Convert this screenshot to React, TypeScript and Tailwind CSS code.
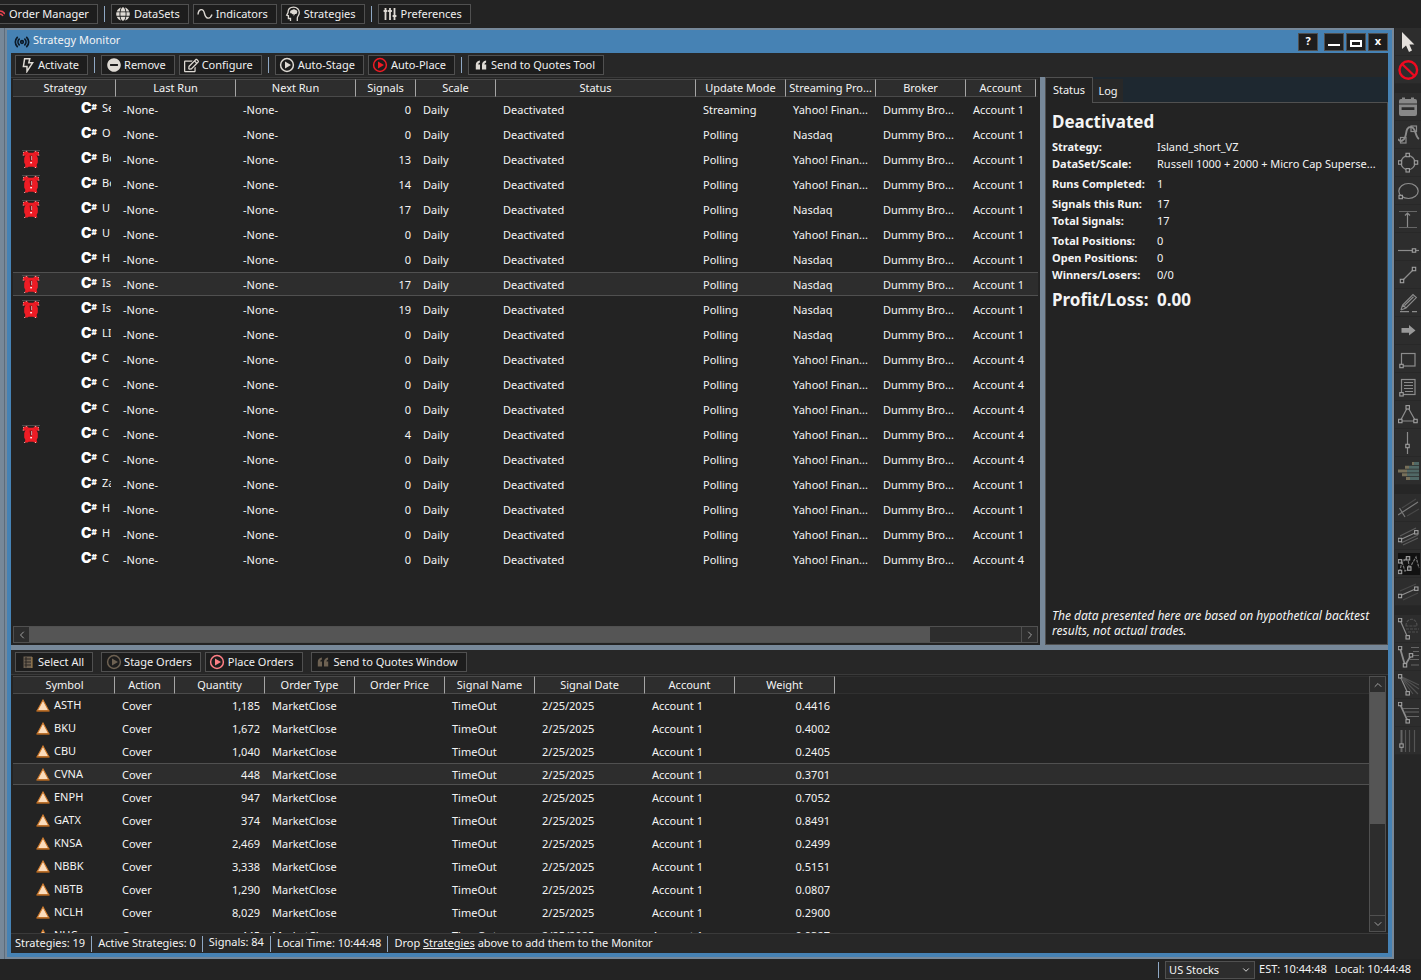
import type { ReactNode } from "react";
import { Radio, ChevronLeft, ChevronRight, ChevronUp, ChevronDown } from "lucide-react";
import { FaGlobe, FaMinusCircle, FaRegEdit } from "react-icons/fa";

/* ---------- icons ---------- */

function PlayIcon() {
  return (
    <svg viewBox="0 0 16 16" className="size-4" fill="none" stroke="currentColor" strokeWidth="1.5">
      <circle cx="8" cy="8" r="6.4" />
      <path d="M6 4.6 L12 8 L6 11.4 Z" fill="currentColor" stroke="none" />
    </svg>
  );
}

function BoltIcon() {
  return (
    <svg viewBox="0 0 16 16" className="size-4" fill="none" stroke="currentColor" strokeWidth="1.5">
      <path d="M4.6 1.8H9.8L8.8 5.8H12.6L7 14.4V9.4H3.4Z" />
    </svg>
  );
}

function QuoteIcon() {
  return (
    <svg viewBox="0 0 16 16" className="size-4" fill="currentColor">
      <path d="M6.9 3.4V5.4Q5.2 5.8 5.2 7.6H7V12.6H2.8V8Q2.8 4 6.9 3.4Z" />
      <path d="M13.1 3.4V5.4Q11.4 5.8 11.4 7.6H13.2V12.6H9V8Q9 4 13.1 3.4Z" />
    </svg>
  );
}

function WaveIcon() {
  return (
    <svg viewBox="0 0 16 16" className="size-4" fill="none" stroke="currentColor" strokeWidth="1.4">
      <path d="M1 8.5C1.5 2.5 6.2 2 7.5 7.5S13 14 15 8.5" />
    </svg>
  );
}

function HeadIcon() {
  return (
    <svg viewBox="0 0 16 16" className="size-4" fill="none" stroke="currentColor" strokeWidth="1.3">
      <path d="M5.5 15V12.5H3.4V9.8L1.7 9.2L3 6.6C3 3 5.5 1.2 8.5 1.2C12 1.2 14.3 3.6 14.3 6.7C14.3 9.3 12.3 10.4 12.3 12V15" />
      <path d="M5.2 6.8C4.6 5.2 6 3.9 7.2 4C8 2.8 10 3 10.6 4C12 4 12.8 5.6 12 6.8C12 8 10.8 8.3 10 8L8.6 10.3V8.2C7.5 8.6 6.8 8 6.8 7.3C6 7.6 5.4 7.4 5.2 6.8Z" fill="currentColor" stroke="none" />
    </svg>
  );
}

function SlidersIcon() {
  return (
    <svg viewBox="0 0 16 16" className="size-4" fill="none" stroke="currentColor" strokeWidth="1.8">
      <path d="M3.5 2V14M8 2V14M12.5 2V14" />
      <path d="M1.6 5H5.4M6.1 5H9.9M10.6 10H14.4" strokeWidth="2" />
    </svg>
  );
}

function ListIcon() {
  return (
    <svg viewBox="0 0 16 16" className="size-4">
      <rect x="3.5" y="2.5" width="8.5" height="11.5" fill="#6d6152" />
      <path d="M4.5 5H11M4.5 8H11M4.5 11H11" stroke="#2b2622" />
      <path d="M6 3V13.5" stroke="#2b2622" />
      <path d="M12 3V14" stroke="#a8834a" />
    </svg>
  );
}

function AlarmIcon() {
  return (
    <svg viewBox="0 0 18 18" className="size-[18px]">
      <path d="M0 .5H18" stroke="#4c4c4c" />
      <path d="M1 5.4V2.6L3 1.4H6L6.4 3L3.4 5.8ZM17 5.4V2.6L15 1.4H12L11.6 3L14.6 5.8Z" fill="#ee1c25" />
      <path d="M6 2.8H12L14.8 5.8L15.8 8V12.6L14.6 15L15.4 17.6H12.4L11.4 16.8H6.6L5.6 17.6H2.6L3.4 15L2.2 12.6V8L3.2 5.8Z" fill="#ee1c25" />
      <path d="M1.2 5.6V2.6L3 1.4H6M16.8 5.6V2.6L15 1.4H12M2.2 17.5H5M13 17.5H15.8" fill="none" stroke="#f5b5b0" strokeDasharray="1 2" />
      <path d="M7.6 5.6H10.4L9.8 11H8.2Z" fill="#7c1216" />
      <path d="M9.6 6V10.2" stroke="#d8c8c8" strokeWidth=".8" />
      <rect x="8.3" y="12" width="1.6" height="1.4" fill="#fff" />
    </svg>
  );
}

function TriangleIcon() {
  return (
    <svg viewBox="0 0 14 13" className="h-[13px] w-[14px] shrink-0">
      <path d="M7 1 L12.8 11.8 H1.2 Z" fill="#fbdcbc" stroke="#cf7a2b" strokeWidth="1.1" />
      <path d="M.6 12H13.4" stroke="#b0651f" strokeWidth="1.3" />
    </svg>
  );
}

/* ---------- drawing tool palette ---------- */

const Dot = ({ x, y }: { x: number; y: number }) => (
  <rect x={x - 1.7} y={y - 1.7} width="3.4" height="3.4" fill="#2d2d2d" stroke="#a0a0a0" strokeWidth="1.1" />
);

const tools: { name: string; art: ReactNode; dark?: boolean }[][] = [
  [
    { name: "Pointer", art: <path d="M4 1V18L8 14.6L11 21L14 19.6L11.4 13.6H16.4Z" fill="#e4e0dc" stroke="none" /> },
    {
      name: "Clear",
      art: (
        <g stroke="#ee0a20" strokeWidth="2.4">
          <circle cx="10.3" cy="11" r="8.8" />
          <path d="M4 5L16.6 17" />
        </g>
      ),
    },
  ],
  [
    {
      name: "Calendar",
      art: (
        <g stroke="none" fill="#888">
          <path d="M1 7.6V5Q1 3 3 3H4V1.5H7V3H13V1.5H16V3H17Q19 3 19 5V7.6Z" />
          <path d="M1 8.4H19V18Q19 20 17 20H3Q1 20 1 18ZM3.6 11.2V14H16.4V11.2Z" fillRule="evenodd" />
        </g>
      ),
    },
    {
      name: "Curve",
      art: (
        <>
          <path d="M0 15C2 18 4 17 5 16C10 13 6 3 13 3C18 3 17 13 21 15" strokeWidth="1.9" />
          <rect x="2.5" y="13.5" width="5.5" height="5.5" />
          <rect x="13" y="2" width="5.5" height="5.5" />
        </>
      ),
    },
    {
      name: "Circle",
      art: (
        <>
          <circle cx="10" cy="10.7" r="7" />
          <Dot x={9.7} y={3} />
          <Dot x={2} y={10.5} />
          <Dot x={18} y={10.5} />
          <Dot x={9.7} y={18.3} />
        </>
      ),
    },
    {
      name: "Ellipse",
      art: (
        <>
          <ellipse cx="10.5" cy="11" rx="9.7" ry="7.5" />
          <Dot x={2.7} y={17} />
        </>
      ),
    },
    {
      name: "Range",
      art: (
        <>
          <path d="M1 3.5H19M1 19.5H19" stroke="#666" />
          <path d="M9.5 19V5M7 7.5L9.5 5L12 7.5" />
        </>
      ),
    },
    {
      name: "Horizontal line",
      art: (
        <>
          <path d="M0 14.5H21" />
          <Dot x={16} y={14.5} />
        </>
      ),
    },
    {
      name: "Trend line",
      art: (
        <>
          <path d="M4 17L16 5" />
          <Dot x={4} y={17} />
          <Dot x={16} y={5} />
        </>
      ),
    },
    { name: "Pencil", art: <path d="M3 18L4.6 13L15 2.6L18.3 5.6L8 16L3 18M4.6 13L8 16M6.5 13.5L15.5 4.8M2 19.6H11M14 19.6H19" /> },
    { name: "Arrow", art: <path d="M3.5 8H11V5L17.5 10.4L11 15.6V12.8H3.5Z" fill="#999" stroke="none" /> },
    {
      name: "Rectangle",
      art: (
        <>
          <rect x="3.5" y="5.5" width="13.5" height="12.5" />
          <Dot x={3.5} y={18} />
        </>
      ),
    },
    {
      name: "Text note",
      art: (
        <>
          <rect x="3.5" y="3.5" width="13.5" height="15" />
          <path d="M6 6.5H15M6 9.5H15M6 12.5H15M7 15.5H15" />
          <Dot x={3.5} y={18.3} />
        </>
      ),
    },
    {
      name: "Triangle",
      art: (
        <>
          <path d="M9.7 3L2.3 17H17.5Z" />
          <Dot x={9.7} y={3.3} />
          <Dot x={2.3} y={17} />
          <Dot x={17.5} y={17} />
        </>
      ),
    },
    {
      name: "Vertical line",
      art: (
        <>
          <path d="M9.5 0V22" />
          <Dot x={9.5} y={14} />
        </>
      ),
    },
    {
      name: "Volume profile",
      art: (
        <g strokeWidth="3">
          <path d="M16 3.4H21M11 7.2H21M9 11H21M9 14.8H21M12 18.6H21" stroke="#506866" />
          <path d="M14 3.4H16M7 7.2H11M0 11H9M4 14.8H9M8 18.6H12" stroke="#77705a" />
        </g>
      ),
    },
  ],
  [
    {
      name: "Pitchfork",
      art: (
        <>
          <path d="M0 18L20 5M1.5 11L7 20" stroke="#7a7a7a" />
          <path d="M4 11L18 2M9 19L21 12" stroke="#484848" />
        </>
      ),
    },
    {
      name: "Channel",
      art: (
        <>
          <path d="M1.5 15L18 7.5" />
          <path d="M2 11L18 3M3 18L20 10M5 20L20 13" stroke="#5c5c5c" />
          <Dot x={1.9} y={15} />
          <Dot x={18.3} y={7.3} />
        </>
      ),
    },
    {
      name: "Pattern",
      dark: true,
      art: (
        <>
          <path d="M1.5 19L4 9L10 5.3L11.3 15.6L18 4L21 15M1.5 8.3L10 5.3M4 9L7 18L11 15.6" stroke="#777" strokeDasharray="3 1" />
          <Dot x={2} y={8.3} />
          <Dot x={2} y={19} />
          <Dot x={10} y={5.3} />
          <Dot x={11.3} y={15.6} />
        </>
      ),
    },
    {
      name: "Regression",
      art: (
        <>
          <path d="M1.5 15L18 7.7" />
          <path d="M2 10L18 3M5 19L20 12" stroke="#484848" />
          <Dot x={1.9} y={15} />
          <Dot x={18.3} y={7.7} />
        </>
      ),
    },
  ],
  [
    {
      name: "Fibonacci arcs",
      art: (
        <>
          <path d="M2 2L9.5 19" />
          <path d="M8 8C8 -1 19 -1 19 8ZM8 11H21M10 14H20" stroke="#505050" strokeDasharray="3 1" />
          <Dot x={2} y={2} />
          <Dot x={9.7} y={19.3} />
        </>
      ),
    },
    {
      name: "Fibonacci extension",
      art: (
        <>
          <path d="M2 2L7 19.3L13 9.5" strokeWidth="1.8" />
          <path d="M13 1.5H21M15 5.5H21M15 9.5H21M12 13.5H21M13 19H21" stroke="#666" />
          <Dot x={2} y={2} />
          <Dot x={7} y={19.3} />
          <Dot x={13} y={9.3} />
        </>
      ),
    },
    {
      name: "Fibonacci fan",
      art: (
        <>
          <path d="M2 2L9.7 19" />
          <path d="M2 2L21 11M2 2L21 15M2 2L20 20M2 2L15 20" stroke="#505050" />
          <Dot x={2} y={2.3} />
          <Dot x={9.7} y={19.3} />
        </>
      ),
    },
    {
      name: "Fibonacci retracement",
      art: (
        <>
          <path d="M2 2L9.7 19" strokeWidth="1.8" />
          <path d="M5 6.5H21M7 10H21M8 14.5H21" stroke="#666" />
          <Dot x={2} y={2} />
          <Dot x={9.7} y={19.3} />
        </>
      ),
    },
    {
      name: "Time zones",
      art: (
        <>
          <path d="M3.5 0V22" stroke="#666" strokeWidth="2" />
          <path d="M7.5 0V22M11.5 0V22M16.5 0V22" stroke="#555" />
          <Dot x={3.5} y={15.6} />
        </>
      ),
    },
  ],
];

function ToolPalette() {
  return (
    <aside className="flex w-[27px] shrink-0 flex-col gap-[9px] bg-[#262626]">
      {tools.map((group, i) => (
        <div key={i} className="flex flex-col">
          {group.map((t) => (
            <button key={t.name} aria-label={t.name} className="flex h-7 items-center border-b border-l border-[#282828] bg-[#2d2d2d] pl-[3px]">
              <svg viewBox="0 0 22 22" className={t.dark ? "size-[22px] bg-[#111111]" : "size-[22px]"} fill="none" stroke="#8c8c8c" strokeWidth="1.2">
                {t.art}
              </svg>
            </button>
          ))}
        </div>
      ))}
    </aside>
  );
}

/* ---------- shared controls ---------- */

function ToolButton({ icon, label }: { icon: ReactNode; label: string }) {
  return (
    <button className="flex h-5 shrink-0 items-center gap-[2px] whitespace-nowrap border border-[#505050] bg-[#1d1d1d] pl-[3px] pr-2 text-[#f0f0f0]">
      <span className="flex size-[17px] items-center justify-center text-[#dedad4]">{icon}</span>
      <span>{label}</span>
    </button>
  );
}

const Divider = () => <span className="mx-[2px] h-4 w-px shrink-0 bg-[#8fa8c4]" />;

interface Column {
  label: string;
  width: string;
}

function HeaderRow({ columns }: { columns: Column[] }) {
  return (
    <thead>
      <tr>
        {columns.map((c) => (
          <th
            key={c.label}
            scope="col"
            className="h-[18px] overflow-hidden whitespace-nowrap border-y border-r border-y-[#4a4a4a] border-r-[#a5a5a5] bg-[#2d2d2d] p-0 text-center font-normal leading-4 first:pl-[2px]"
          >
            {c.label}
          </th>
        ))}
        <th className="border-y border-[#303030] bg-[#262626] p-0" />
      </tr>
    </thead>
  );
}

/* ---------- strategies table ---------- */

const strategyColumns: Column[] = [
  { label: "Strategy", width: "w-[103px]" },
  { label: "Last Run", width: "w-[120px]" },
  { label: "Next Run", width: "w-[120px]" },
  { label: "Signals", width: "w-[60px]" },
  { label: "Scale", width: "w-[80px]" },
  { label: "Status", width: "w-[200px]" },
  { label: "Update Mode", width: "w-[90px]" },
  { label: "Streaming Pro...", width: "w-[90px]" },
  { label: "Broker", width: "w-[90px]" },
  { label: "Account", width: "w-[70px]" },
];

const YAHOO = "Yahoo! Finan...";
type Strategy = [name: string, alarm: boolean, signals: number, mode: string, provider: string, account: string];

const strategies: Strategy[] = [
  ["Se", false, 0, "Streaming", YAHOO, "Account 1"],
  ["O", false, 0, "Polling", "Nasdaq", "Account 1"],
  ["Bo", true, 13, "Polling", YAHOO, "Account 1"],
  ["Bo", true, 14, "Polling", YAHOO, "Account 1"],
  ["U", true, 17, "Polling", "Nasdaq", "Account 1"],
  ["U", false, 0, "Polling", YAHOO, "Account 1"],
  ["H", false, 0, "Polling", "Nasdaq", "Account 1"],
  ["Is", true, 17, "Polling", "Nasdaq", "Account 1"],
  ["Is", true, 19, "Polling", "Nasdaq", "Account 1"],
  ["LI", false, 0, "Polling", "Nasdaq", "Account 1"],
  ["C", false, 0, "Polling", YAHOO, "Account 4"],
  ["C", false, 0, "Polling", YAHOO, "Account 4"],
  ["C", false, 0, "Polling", YAHOO, "Account 4"],
  ["C", true, 4, "Polling", YAHOO, "Account 4"],
  ["C", false, 0, "Polling", YAHOO, "Account 4"],
  ["Za", false, 0, "Polling", YAHOO, "Account 1"],
  ["H", false, 0, "Polling", YAHOO, "Account 1"],
  ["H", false, 0, "Polling", YAHOO, "Account 1"],
  ["C", false, 0, "Polling", YAHOO, "Account 4"],
];

function StrategyTable() {
  return (
    <table className="w-full table-fixed border-separate border-spacing-0">
      <colgroup>
        {strategyColumns.map((c) => (
          <col key={c.label} className={c.width} />
        ))}
        <col />
      </colgroup>
      <HeaderRow columns={strategyColumns} />
      <tbody>
        {strategies.map(([name, alarm, signals, mode, provider, account], i) => {
          const selected = i === 7;
          const box = selected
            ? "flex h-6 items-center overflow-hidden whitespace-nowrap border-y border-[#505050] bg-[#2d2d2d]"
            : "flex h-6 items-center overflow-hidden whitespace-nowrap";
          const cells = ["-None-", "-None-", String(signals), "Daily", "Deactivated", mode, provider, "Dummy Bro...", account];
          return (
            <tr key={i}>
              <td className="h-[25px] p-0 align-top">
                <div className={box}>
                  <span className="flex w-[68px] shrink-0 pl-[9px]">{alarm && <AlarmIcon />}</span>
                  <span className="flex w-[21px] shrink-0 pb-[3px] font-['Inter',sans-serif] text-[14px] font-black leading-4 text-white">
                    C<span className="text-[8px] leading-[15px]">#</span>
                  </span>
                  <span className="w-[9px] shrink-0 overflow-hidden pb-[3px] leading-4">{name}</span>
                </div>
              </td>
              {cells.map((text, c) => (
                <td key={c} className="h-[25px] p-0 align-top">
                  <div className={box}>
                    <span className={c === 2 ? "w-full pr-[5px] pt-[2px] text-right" : "pl-[7px] pt-[2px]"}>{text}</span>
                  </div>
                </td>
              ))}
              <td className="h-[25px] p-0 align-top">
                <div className={box} />
              </td>
            </tr>
          );
        })}
      </tbody>
    </table>
  );
}

/* ---------- signals table ---------- */

const signalColumns: Column[] = [
  { label: "Symbol", width: "w-[102px]" },
  { label: "Action", width: "w-[60px]" },
  { label: "Quantity", width: "w-[90px]" },
  { label: "Order Type", width: "w-[90px]" },
  { label: "Order Price", width: "w-[90px]" },
  { label: "Signal Name", width: "w-[90px]" },
  { label: "Signal Date", width: "w-[110px]" },
  { label: "Account", width: "w-[90px]" },
  { label: "Weight", width: "w-[100px]" },
];

const signals: [symbol: string, quantity: string, weight: string][] = [
  ["ASTH", "1,185", "0.4416"],
  ["BKU", "1,672", "0.4002"],
  ["CBU", "1,040", "0.2405"],
  ["CVNA", "448", "0.3701"],
  ["ENPH", "947", "0.7052"],
  ["GATX", "374", "0.8491"],
  ["KNSA", "2,469", "0.2499"],
  ["NBBK", "3,338", "0.5151"],
  ["NBTB", "1,290", "0.0807"],
  ["NCLH", "8,029", "0.2900"],
  ["NHC", "445", "0.9327"],
];

function SignalTable() {
  return (
    <table className="w-full table-fixed border-separate border-spacing-0">
      <colgroup>
        {signalColumns.map((c) => (
          <col key={c.label} className={c.width} />
        ))}
        <col />
      </colgroup>
      <HeaderRow columns={signalColumns} />
      <tbody>
        {signals.map(([symbol, quantity, weight], i) => {
          const box =
            i === 3
              ? "flex h-[22px] items-center whitespace-nowrap border-y border-[#505050] bg-[#2d2d2d]"
              : "flex h-[22px] items-center whitespace-nowrap";
          const cells = ["Cover", quantity, "MarketClose", "", "TimeOut", "2/25/2025", "Account 1", weight];
          return (
            <tr key={symbol}>
              <td className="h-[23px] p-0 align-top">
                <div className={box}>
                  <span className="flex items-center gap-1 pl-[23px]">
                    <TriangleIcon />
                    {symbol}
                  </span>
                </div>
              </td>
              {cells.map((text, c) => (
                <td key={c} className="h-[23px] p-0 align-top">
                  <div className={box}>
                    <span className={c === 1 || c === 7 ? "w-full pr-[5px] pt-[2px] text-right" : "pl-[7px] pt-[2px]"}>{text}</span>
                  </div>
                </td>
              ))}
              <td className="h-[23px] p-0 align-top">
                <div className={box} />
              </td>
            </tr>
          );
        })}
      </tbody>
    </table>
  );
}

/* ---------- status panel ---------- */

const statusGroups: [string, string][][] = [
  [
    ["Strategy:", "Island_short_VZ"],
    ["DataSet/Scale:", "Russell 1000 + 2000 + Micro Cap Superse..."],
  ],
  [["Runs Completed:", "1"]],
  [
    ["Signals this Run:", "17"],
    ["Total Signals:", "17"],
  ],
  [
    ["Total Positions:", "0"],
    ["Open Positions:", "0"],
    ["Winners/Losers:", "0/0"],
  ],
];

function StatusPanel() {
  return (
    <section className="flex w-[343px] shrink-0 flex-col">
      <div role="tablist" className="flex h-[26px] shrink-0 items-end bg-[#1e2830]">
        <button role="tab" aria-selected="true" className="h-[26px] w-12 border border-b-0 border-[#505050] bg-[#232323]">
          Status
        </button>
        <button role="tab" aria-selected="false" className="h-6 w-[30px] border-b border-[#505050] bg-[#282828] pt-px">
          Log
        </button>
        <span className="h-px flex-1 bg-[#505050]" />
      </div>
      <div className="flex flex-1 flex-col border border-t-0 border-[#505050] px-[6px] pb-[6px]">
        <h2 className="mt-[6px] text-[17px] font-bold leading-[26px]">Deactivated</h2>
        <dl className="mt-[3px] flex flex-col gap-[3px]">
          {statusGroups.map((group, i) => (
            <div key={i}>
              {group.map(([k, v]) => (
                <div key={k} className="flex whitespace-nowrap leading-[17px]">
                  <dt className="w-[105px] shrink-0 font-bold">{k}</dt>
                  <dd>{v}</dd>
                </div>
              ))}
            </div>
          ))}
        </dl>
        <p className="mt-[5px] flex text-[17px] font-bold leading-6">
          <span className="w-[105px] shrink-0 whitespace-nowrap">Profit/Loss:</span>
          <span>0.00</span>
        </p>
        <p className="mt-auto text-[12px] italic leading-[15px]">
          The data presented here are based on hypothetical backtest results, not actual trades.
        </p>
      </div>
    </section>
  );
}

/* ---------- page ---------- */

const CaptionButton = ({ label, children }: { label: string; children: ReactNode }) => (
  <button aria-label={label} className="flex h-[18px] w-5 items-center justify-center border border-[#505050] bg-[#1d1d1d] font-bold text-white">
    {children}
  </button>
);

export default function App() {
  return (
    <div className="flex h-screen flex-col overflow-hidden bg-[#232323] font-['Noto_Sans',sans-serif] text-[11px] text-[#f4f4f4]">
      <nav className="flex h-7 shrink-0 items-center gap-1 overflow-hidden">
        <button className="flex h-5 items-center gap-1 whitespace-nowrap border border-l-0 border-[#505050] bg-[#1d1d1d] pr-2">
          <svg viewBox="0 0 5 16" className="h-4 w-[5px]" fill="none" stroke="#e8434f" strokeWidth="1.5">
            <path d="M0 5Q3 5 5 8M0 8Q2 8 3 10" />
          </svg>
          Order Manager
        </button>
        <Divider />
        <ToolButton icon={<FaGlobe className="size-[14px]" />} label="DataSets" />
        <ToolButton icon={<WaveIcon />} label="Indicators" />
        <ToolButton icon={<HeadIcon />} label="Strategies" />
        <Divider />
        <ToolButton icon={<SlidersIcon />} label="Preferences" />
      </nav>

      <div className="flex min-h-0 flex-1">
        <div className="w-[5px] shrink-0 border-r border-[#5d6c7b] bg-[#778899]" />
        <main className="flex min-w-0 flex-1 flex-col border-2 border-[#778899]">
          <div className="flex min-h-0 flex-1 flex-col border-4 border-t-0 border-[#4682b4]">
            <header className="flex h-[23px] shrink-0 items-center gap-[3px] bg-[#4682b4] pl-[3px]">
              <Radio className="size-4 text-[#0c1a28]" strokeWidth={2.5} />
              <h1 className="pb-[2px]">Strategy Monitor</h1>
              <div className="ml-auto flex gap-[2px]">
                <CaptionButton label="Help">?</CaptionButton>
                <span className="w-[2px]" />
                <CaptionButton label="Minimize">
                  <span className="mt-[6px] h-[2px] w-3 bg-white" />
                </CaptionButton>
                <CaptionButton label="Maximize">
                  <span className="mt-[3px] h-[7px] w-3 border-2 border-white" />
                </CaptionButton>
                <CaptionButton label="Close">x</CaptionButton>
              </div>
            </header>

            <div className="flex min-h-0 flex-[592_0_0px] flex-col">
              <div className="flex h-6 shrink-0 items-center gap-1 bg-[#272727] pl-1">
                <ToolButton icon={<BoltIcon />} label="Activate" />
                <Divider />
                <ToolButton icon={<FaMinusCircle className="size-[14px]" />} label="Remove" />
                <ToolButton icon={<FaRegEdit className="size-[15px]" />} label="Configure" />
                <Divider />
                <ToolButton icon={<PlayIcon />} label="Auto-Stage" />
                <ToolButton icon={<span className="text-[#ee1c25]"><PlayIcon /></span>} label="Auto-Place" />
                <Divider />
                <ToolButton icon={<QuoteIcon />} label="Send to Quotes Tool" />
              </div>
              <div className="flex min-h-0 flex-1">
                <section className="flex min-w-0 flex-1 flex-col border-t border-[#3a3a3a] px-[2px] pb-[2px] pt-px">
                  <div className="min-h-0 flex-1 overflow-hidden">
                    <StrategyTable />
                  </div>
                  <div className="flex h-[17px] shrink-0 border border-[#505050] bg-[#2d2d2d]">
                    <button aria-label="Scroll left" className="flex w-[15px] shrink-0 items-center justify-center text-[#a0a0a0]">
                      <ChevronLeft className="size-3" />
                    </button>
                    <div className="flex-[901_0_0px] bg-[#555555]" />
                    <div className="flex-[91_0_0px]" />
                    <button aria-label="Scroll right" className="flex w-4 shrink-0 items-center justify-center border-l border-[#505050] text-[#a0a0a0]">
                      <ChevronRight className="size-3" />
                    </button>
                  </div>
                </section>
                <div className="w-[5px] shrink-0 bg-[#778899]" />
                <StatusPanel />
              </div>
            </div>

            <div className="h-[5px] shrink-0 bg-[#778899]" />

            <div className="flex min-h-0 flex-[303_0_0px] flex-col">
              <div className="flex h-6 shrink-0 items-center gap-1 bg-[#272727] pl-1">
                <ToolButton icon={<ListIcon />} label="Select All" />
                <span />
                <ToolButton icon={<span className="text-[#6d6152]"><PlayIcon /></span>} label="Stage Orders" />
                <ToolButton icon={<span className="text-[#ff7f86]"><PlayIcon /></span>} label="Place Orders" />
                <span />
                <ToolButton icon={<span className="text-[#6d6152]"><QuoteIcon /></span>} label="Send to Quotes Window" />
              </div>
              <div className="flex min-h-0 flex-1 border-t border-[#3a3a3a] pl-[2px] pr-[2px] pt-px">
                <div className="min-w-0 flex-1 overflow-hidden">
                  <SignalTable />
                </div>
                <div className="mb-px flex w-[17px] shrink-0 flex-col border border-[#505050] bg-[#2d2d2d]">
                  <button aria-label="Scroll up" className="flex h-[15px] shrink-0 items-center justify-center text-[#a0a0a0]">
                    <ChevronUp className="size-3" />
                  </button>
                  <div className="flex-[132_0_0px] bg-[#555555]" />
                  <div className="flex-[91_0_0px]" />
                  <button aria-label="Scroll down" className="flex h-4 shrink-0 items-center justify-center border-t border-[#505050] text-[#a0a0a0]">
                    <ChevronDown className="size-3" />
                  </button>
                </div>
              </div>
              <footer className="flex h-5 shrink-0 items-center gap-[6px] whitespace-nowrap border-t border-[#3a3a3a] bg-[#272727] pl-1">
                <span>Strategies: 19</span>
                <span className="h-4 w-px bg-[#8fa8c4]" />
                <span>Active Strategies: 0</span>
                <span className="h-4 w-px bg-[#8fa8c4]" />
                <span className="pb-[3px]">Signals: 84</span>
                <span className="h-4 w-px bg-[#8fa8c4]" />
                <span>Local Time: 10:44:48</span>
                <span className="h-4 w-px bg-[#8fa8c4]" />
                <span>
                  Drop <a href="#strategies" className="underline">Strategies</a> above to add them to the Monitor
                </span>
              </footer>
            </div>
          </div>
        </main>
        <ToolPalette />
      </div>

      <footer className="flex h-[21px] shrink-0 items-center justify-end whitespace-nowrap pr-[10px]">
        <span className="mr-[6px] h-4 w-px bg-[#8fa8c4]" />
        <div className="relative mr-1">
          <select aria-label="Market" className="h-[18px] w-[90px] appearance-none border border-[#505050] bg-[#2d2d2d] pl-[3px]">
            <option>US Stocks</option>
          </select>
          <ChevronDown className="pointer-events-none absolute right-1 top-1 size-[10px]" />
        </div>
        <span className="mr-2">EST: 10:44:48</span>
        <span>Local: 10:44:48</span>
      </footer>
    </div>
  );
}
